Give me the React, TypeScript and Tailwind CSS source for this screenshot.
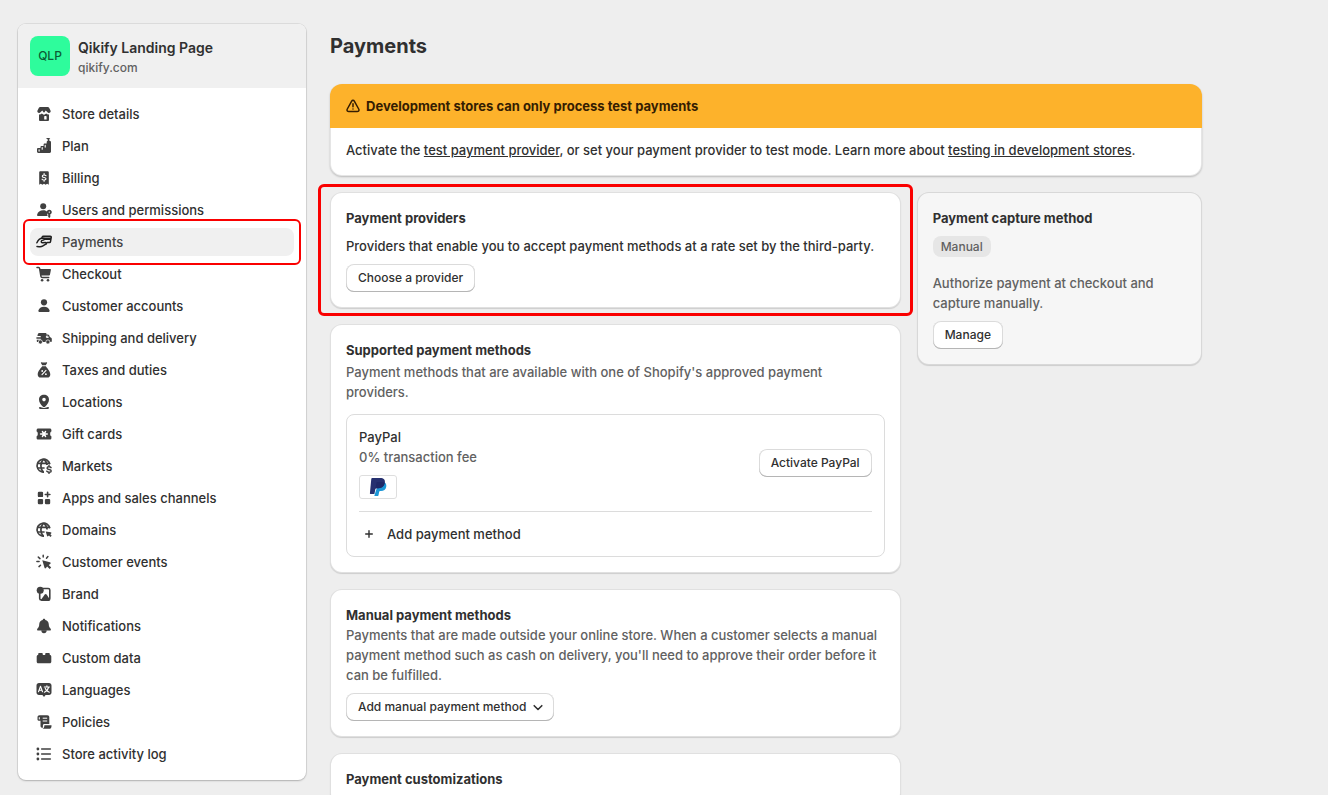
import React from 'react';

type IconProps = { children: React.ReactNode };

const Icon = ({children}: IconProps) => (
    <svg viewBox="0 0 16 16" className="size-4 shrink-0" fill="currentColor" aria-hidden="true">
        {children}
    </svg>
);

const line = {
    fill: "none",
    stroke: "currentColor",
    strokeWidth: 1.6,
    strokeLinecap: "round",
    strokeLinejoin: "round",
} as const;

const cut = {fill: "none", stroke: "#fff", strokeWidth: 1.1, strokeLinecap: "round", strokeLinejoin: "round"} as const;

const globe = (
    <g fill="none" stroke="currentColor" strokeWidth="1.7">
        <path d="M13.900 6.200A6.500 6.500 0 1 0 8 14.200"/>
        <path d="M7.600 1.200C4 4.800 4 10.600 7.400 14.200M7.600 1.200c2.400 1.900 3.500 4 3.500 6.300M1.200 5.400h12.600M1.200 10h7.400"/>
    </g>
);

const navItems = [
    {
        label: "Store details",
        icon: <>
            <path d="M4.200.9h7.600c.6 0 1 .3 1.300.8l1.500 3c.7 1.700-2 3.300-3.300 1.300L9.700 4.600 8.500 6.300c-.3.400-.7.400-1 0L6.300 4.600 4.700 6C3.400 8 .7 6.400 1.400 4.700l1.500-3c.3-.5.7-.8 1.300-.8Z"/>
            <path fillRule="evenodd" d="M3 8.400c1.200.1 2-.3 2.800-1l.8.7c.9.700 1.900.7 2.800 0l.8-.7c.8.700 1.600 1.100 2.800 1V13.700c0 .8-.5 1.300-1.300 1.300H4.300C3.500 15 3 14.500 3 13.700Zm5.200 2.200v3h2.400v-3c0-.4-.3-.7-.7-.7h-1c-.4 0-.7.3-.7.7Z"/>
        </>,
    },
    {
        label: "Plan",
        icon: <>
            <path d="M1 11.300c0-.8.5-1.300 1.300-1.300h2.200V9c0-.7.4-1.100 1.100-1.100h2V6.600c0-.7.4-1.100 1.100-1.100h2V4.200c0-.7.4-1.100 1.100-1.100h1.900c.8 0 1.300.5 1.300 1.300v9.200c0 .8-.5 1.300-1.300 1.300H2.300c-.8 0-1.300-.5-1.300-1.300Z"/>
            <path d="M9.800 0h4.500l-1 1 .2 2.400h-1.700L11.600 1.300Z"/>
            <path {...cut} d="M3.100 11.700v1.400M6.200 9.600v1.600M9.200 7.300v1.800"/>
        </>,
    },
    {
        label: "Billing",
        icon: <>
            <path d="M3.200 2.600c0-.8.500-1.300 1.300-1.300h7c.8 0 1.300.5 1.300 1.300v12.100l-1.600-1-1.600 1.100L8 13.700l-1.600 1.100-1.600-1.100-1.600 1Z"/>
            <path {...cut} strokeWidth="1.200" d="M10 5.700C9.500 4.900 6.300 4.500 6.300 6.200c0 1.800 3.700.8 3.700 2.600 0 1.600-3.300 1.500-3.900.4M8.100 3.600v1M8.100 10.200v1"/>
        </>,
    },
    {
        label: "Users and permissions",
        icon: <>
            <circle cx="7.200" cy="4.200" r="3"/>
            <path d="M7.200 8.300c2 0 3.200.6 4 1.500-.4 1.400.2 2.200.4 4.200H2.400c-1 0-1.500-.6-1.300-1.300.6-2.800 3-4.400 6.100-4.400Z"/>
            <path fillRule="evenodd" d="M13.300 7.700a2.400 2.400 0 0 1 1 4.600v2.700l-1 1-1.100-1v-2.700a2.400 2.400 0 0 1 1.100-4.600Zm0 1.700a.7.700 0 1 0 0 1.400.7.700 0 0 0 0-1.400Z"/>
        </>,
    },
    {
        label: "Payments",
        icon: <>
            <path {...line} strokeWidth="1.500" d="M.9 8.800C2.100 6.200 3.800 4.400 6.200 4.300h1.500c1.100 0 1 1.400 0 1.600L5.700 6.600c-.8 1-.3 2.300 1 2.200l2.700-.4c1.300 0 1.500 1.300.4 1.800l-3.300 2c-1.800 1.200-3 .4-5.500.4"/>
            <path {...line} strokeWidth="1.500" d="M5.900 3.900 6.200 3c.2-.5.600-.7 1.200-.7h6.800c.8 0 1.100.4 1 1.100l-.7 4.200c-.1.700-.5 1-1.200 1h-1.900"/>
            <path d="M7 3.500h8.200l-.4 2.400H9.200Z"/>
        </>,
    },
    {
        label: "Checkout",
        icon: <>
            <path {...line} strokeWidth="1.500" d="M1 1.500h1.600c.6 0 .9.300 1 .9L5 10.500c.1.700.5 1 1.100 1h6.600"/>
            <path d="M3.600 2.900h10.500c.6 0 .9.400.8 1L14 8.600c-.1.600-.6 1-1.200 1H4.800Z"/>
            <circle cx="6.100" cy="14.200" r="1.300"/>
            <circle cx="12" cy="14.200" r="1.300"/>
        </>,
    },
    {
        label: "Customer accounts",
        icon: <>
            <circle cx="8" cy="4.300" r="3.100"/>
            <path d="M8 8.700c3 0 5 1.400 5.600 3.800.2.900-.3 1.500-1.200 1.500H3.600c-.9 0-1.400-.6-1.200-1.500C3 10.100 5 8.700 8 8.700Z"/>
        </>,
    },
    {
        label: "Shipping and delivery",
        icon: <>
            <path d="M3 2.900h6.500c.6 0 1 .4 1 1v.5h1.400c.5 0 .9.200 1.100.7l.9 2 1.200.6c.5.200.7.600.7 1.100v2.300c0 .6-.4 1-1 1H1.700c-.6 0-.9-.3-.9-.9V9.800h3.900V8.700H.4V7.300h4.300V6H1.500V4.600H2C2 3.500 2.400 2.900 3 2.900Z"/>
            <circle cx="4.400" cy="12" r="2.100" stroke="#fff" strokeWidth=".7"/>
            <circle cx="11.900" cy="12" r="2.100" stroke="#fff" strokeWidth=".7"/>
            <path {...cut} strokeWidth=".9" d="M10.800 6h.8l.7 1.500h-1.500Z"/>
        </>,
    },
    {
        label: "Taxes and duties",
        icon: <>
            <path d="M4.900.9C4.700.4 5 .1 5.500.2c1.700.5 3.300.5 5 0 .5-.1.800.2.600.7L9.800 3.300H6.200Z"/>
            <path d="M6.200 4.200h3.600c.5 1.200 4.500 4.400 4.500 8.300 0 2-1.200 3.100-3 3.100H4.700c-1.800 0-3-1.100-3-3.100 0-3.900 4-7.100 4.500-8.300Z"/>
            <path {...cut} d="m6 12.700 4-4.400"/>
            <circle cx="6.200" cy="9" r=".9" fill="#fff"/>
            <circle cx="9.900" cy="12.200" r=".9" fill="#fff"/>
        </>,
    },
    {
        label: "Locations",
        icon: <>
            <path fillRule="evenodd" d="M8 .7c2.900 0 5 2 5 4.800 0 3-1.700 4.800-3.700 7-.7.800-1.900.8-2.600 0C4.700 10.300 3 8.500 3 5.500 3 2.700 5.100.7 8 .7ZM8 3.800a1.800 1.800 0 1 0 0 3.600 1.800 1.800 0 0 0 0-3.600Z"/>
            <path d="M4.100 13.100c1.200 0 1.900 1 3.900 1s2.700-1 3.900-1c1.600 0 1.600 1.900 0 1.900H4.100c-1.600 0-1.600-1.900 0-1.900Z"/>
        </>,
    },
    {
        label: "Gift cards",
        icon: <>
            <path d="M2.200 2.400h11.600c.9 0 1.600.6 1.600 1.600v1.600C13.800 6 13.800 10 15.400 10.300V12c0 1-.7 1.600-1.600 1.600H2.200C1.300 13.600.6 13 .6 12v-1.700C2.200 10 2.200 6 .6 5.600V4c0-1 .7-1.600 1.600-1.600Z"/>
            <path {...cut} strokeWidth="1.400" d="M4.500 8h6.800M6.400 5.500l3.200 5M9.600 5.500l-3.200 5"/>
        </>,
    },
    {
        label: "Markets",
        icon: <>
            {globe}
            <path d="M9.600 7h6.400v9H9.600Z" fill="#fff"/>
            <path {...line} strokeWidth="1.500" d="M15 9.700c-.6-1.200-3.900-1.200-3.900.5 0 1.900 4.100.9 4.100 2.800 0 1.700-3.600 1.600-4.400.2M13 7.600v1.100M13 14.400v.9"/>
        </>,
    },
    {
        label: "Apps and sales channels",
        icon: <>
            <rect x="1.800" y="1.800" width="5.300" height="5.300" rx="1.200"/>
            <rect x="1.800" y="8.900" width="5.300" height="5.300" rx="1.200"/>
            <rect x="8.900" y="8.900" width="5.300" height="5.300" rx="1.200"/>
            <path {...line} d="M11.600 2.200v4.600M9.300 4.500h4.600"/>
        </>,
    },
    {
        label: "Domains",
        icon: <>
            {globe}
            <path d="M9 8.200h7V16H9Z" fill="#fff"/>
            <path d="m9.700 9.400 5 .9c.8.200 1 .8.400 1.300l-.7.600 1.300 1.500-1.300 1.200-1.400-1.500-.7.700c-.5.500-1.100.3-1.300-.4Z"/>
        </>,
    },
    {
        label: "Customer events",
        icon: <>
            <path d="m6.300 6.200 7.600 2.100c.9.200 1 1.100.300 1.600l-1.500 1.100 2.500 2.600-1.500 1.500-2.600-2.500-1.100 1.500c-.5.700-1.300.5-1.500-.300Z"/>
            <path {...line} strokeWidth="1.500" d="M7.200 1.200v1.900M2.300 3.100l1.700 1.500M11.900 2.500l-1.400 1.700M.9 7.500h2.200M3 12.600l1.500-1.400"/>
        </>,
    },
    {
        label: "Brand",
        icon: <>
            <path {...line} strokeWidth="1.600" d="M5.500 2.500h6.700c1 0 1.600.6 1.600 1.600v8.300c0 1-.6 1.600-1.600 1.600H5.300c-1 0-1.600-.6-1.600-1.600V7"/>
            <circle cx="4.200" cy="4.300" r="3.500"/>
            <path d="M4.900 14 8.700 8.600c.5-.7 1.400-.7 1.900 0l3.700 5.400-1.500 1H5.400Z"/>
        </>,
    },
    {
        label: "Notifications",
        icon: <>
            <path d="M8 .8c.8 0 1.200.5 1.300 1.200 2.100.5 3.400 2.100 3.500 4.500.1 2.200.6 2.800 1.700 4 .8.900.5 2.100-.8 2.100H2.300c-1.300 0-1.600-1.200-.8-2.100 1.100-1.200 1.600-1.800 1.700-4C3.300 4.100 4.600 2.500 6.700 2 6.800 1.300 7.200.8 8 .8Z"/>
            <path d="M5.300 12.300h5.400c0 2-1 3-2.700 3s-2.700-1-2.700-3Z"/>
        </>,
    },
    {
        label: "Custom data",
        icon: <path d="M2.200 5V4c0-.7.400-1.100 1.100-1.100h2.400c.7 0 1.100.4 1.100 1.100v1h2.400V4c0-.7.400-1.100 1.100-1.100h2.400c.7 0 1.100.4 1.100 1.100v1c.9 0 1.500.6 1.500 1.500v5.200c0 .9-.6 1.500-1.500 1.500H2.200c-.9 0-1.500-.6-1.500-1.500V6.500C.7 5.600 1.300 5 2.200 5Z"/>,
    },
    {
        label: "Languages",
        icon: <>
            <path d="M3 1h10c1.500 0 2.500 1 2.500 2.500v7c0 1.500-1 2.500-2.500 2.500H9.600L8 14.900 6.400 13H3C1.500 13 .5 12 .5 10.500v-7C.5 2 1.500 1 3 1Z"/>
            <path {...cut} d="m2.500 9.800 2-5.600 2 5.600M3.200 8.200h2.600M8.300 5h5.200M10.900 3.700V5M12.600 5.200c-.5 2.300-1.900 4-4.200 5M9.200 6.200c.5 1.800 1.900 3.300 4.200 4"/>
        </>,
    },
    {
        label: "Policies",
        icon: <>
            <path d="M3.600 1.200h7.700c1.300 0 2 .8 2 2V10H8.400c-.9 0-1.500.6-1.500 1.500v2.300c-1.500.1-2.400-.7-2.400-2.100V6.700H2.600c-.7 0-1.100-.4-1.100-1.100V3.300c0-1.300.8-2.100 2.100-2.100Z"/>
            <path {...cut} strokeWidth="1" d="M3.300 5V3.600M7.100 4.200h3.700M7.100 7h3.700"/>
            <path d="M8.400 11.200h7.100v1c0 1.600-.9 2.600-2.500 2.600H6.500c1.300-.5 1.900-1.600 1.900-3.600Z"/>
        </>,
    },
    {
        label: "Store activity log",
        icon: <>
            <circle cx="1.900" cy="3" r="1.400"/>
            <circle cx="1.900" cy="8" r="1.400"/>
            <circle cx="1.900" cy="13" r="1.400"/>
            <path {...line} d="M5.700 3h8.600M5.700 8h8.600M5.700 13h8.600"/>
        </>,
    },
];

const cardClass = "rounded-xl p-4 shadow-[inset_0_0_0_1px_rgba(0,0,0,0.12),0_1px_1px_rgba(0,0,0,0.14)]";

const Button = ({children}: { children: React.ReactNode }) => (
    <button
        type="button"
        className="inline-flex h-7 items-center gap-1 rounded-lg bg-white px-3 text-xs font-[550] whitespace-nowrap shadow-[inset_0_-1px_0_#b5b5b5,inset_0_0_0_1px_rgba(0,0,0,0.14)]"
    >
        {children}
    </button>
);

const Sidebar = () => (
    <aside className="w-72 shrink-0 rounded-lg bg-white shadow-[0_0_0_1px_rgba(0,0,0,0.07),0_1px_2px_rgba(0,0,0,0.2)]">
        <div className="flex h-16 gap-2 rounded-t-lg bg-[#f0f0f0] p-3">
            <div className="flex size-10 items-center justify-center rounded-lg bg-[#2efc9c] text-xs text-[#0b5c35]">
                QLP
            </div>
            <div className="pt-0.5">
                <p className="text-sm leading-5 font-semibold">Qikify Landing Page</p>
                <p className="text-xs leading-5 text-[#616161]">qikify.com</p>
            </div>
        </div>
        <nav aria-label="Settings" className="p-3">
            <ul className="space-y-1">
                {navItems.map(({label, icon}) => {
                    const active = label === "Payments";
                    return (
                        <li key={label} className="relative">
                            <a
                                href="#"
                                aria-current={active ? "page" : undefined}
                                className={`flex h-7 items-center gap-2.5 rounded-lg px-1.5 font-[550] ${active ? "bg-[#f0f0f0] text-[#454545]" : ""}`}
                            >
                                <span className={active ? "text-[#1f1f1f]" : "text-[#404040]"}>
                                    <Icon>{icon}</Icon>
                                </span>
                                {label}
                            </a>
                            {active && (
                                <div className="pointer-events-none absolute -inset-x-[7px] -inset-y-[9px] z-10 rounded-md border-2 border-[#fa0000]"/>
                            )}
                        </li>
                    );
                })}
            </ul>
        </nav>
    </aside>
);

const App = () => {
    return (
        <div
            className="min-h-screen bg-[#eeeeee] py-6 pl-[18px] pr-4 font-['Inter',sans-serif] text-[13px] leading-5 font-[450] text-[#303030]">
            <div className="flex max-w-[1184px] items-start gap-6">
                <Sidebar/>
                <main className="min-w-0 flex-1">
                    <h1 className="pt-2 text-xl leading-7 font-[650]">Payments</h1>

                    <section
                        className="mt-6 overflow-hidden rounded-xl bg-white shadow-[inset_0_0_0_1px_rgba(0,0,0,0.1),0_1px_2px_rgba(0,0,0,0.22)]">
                        <div className="flex h-11 items-center gap-1.5 bg-[#fdb22b] px-4 text-[#351d02]">
                            <svg viewBox="-.5 0 15 14" className="size-3.5 shrink-0" fill="none"
                                 stroke="currentColor" strokeWidth="1.600" strokeLinecap="round" strokeLinejoin="round"
                                 aria-hidden="true">
                                <path d="M5.600 1.700c.6-1.100 2.200-1.100 2.800 0l4.700 8.500c.8 1.500 0 2.800-1.700 2.800H2.600C.9 13 .1 11.700.9 10.200Z"/>
                                <path d="M7 4.700v3M7 10.200v.1"/>
                            </svg>
                            <h2 className="font-[650]">Development stores can only process test payments</h2>
                        </div>
                        <p className="px-4 pt-3 pb-4">
                            Activate the <a href="#" className="underline">test payment provider</a>, or set your
                            payment provider to test mode. Learn more about{" "}
                            <a href="#" className="underline">testing in development stores</a>.
                        </p>
                    </section>

                    <div className="mt-4 grid grid-cols-[2fr_1fr] items-start gap-4">
                        <div className="space-y-4">
                            <section className={`relative bg-white ${cardClass}`}>
                                <h2 className="font-[650]">Payment providers</h2>
                                <p className="my-2">
                                    Providers that enable you to accept payment methods at a rate set by the
                                    third-party.
                                </p>
                                <Button>Choose a provider</Button>
                                <div className="pointer-events-none absolute -inset-x-3 -inset-y-2 rounded-md border-3 border-[#fa0000]"/>
                            </section>

                            <section className={`bg-white ${cardClass}`}>
                                <h2 className="font-[650]">Supported payment methods</h2>
                                <p className="mt-0.5 max-w-lg text-[#616161]">
                                    Payment methods that are available with one of Shopify's approved payment
                                    providers.
                                </p>
                                <div className="mt-3 rounded-lg border border-[#dcdcdc] p-3">
                                    <div className="flex items-center justify-between border-b border-[#dcdcdc] pb-3">
                                        <div>
                                            <h3 className="font-[550]">PayPal</h3>
                                            <p className="text-[#616161]">0% transaction fee</p>
                                            <svg viewBox="0 0 38 24" className="mt-2 h-6 w-[38px]" role="img"
                                                 aria-label="PayPal">
                                                <rect x=".5" y=".5" width="37" height="23" rx="2.500" fill="#fff"
                                                      stroke="#dedede"/>
                                                <path fill="#1b96d6"
                                                      d="M25.700 7.600c1.500.9 1.900 2.600 1.500 4.500-.5 2.600-2.400 3.900-5.200 3.900h-.9c-.5 0-.8.300-.9.700l-.7 3.600c-.1.400-.3.600-.7.600h-3.500l1.500-5 2-5.500Z"/>
                                                <path fill="#26306f"
                                                      d="M13.200 3h7.900c3.600 0 5.400 1.700 4.700 5-.7 3.500-2.900 5.200-6.400 5.200h-2.100c-.5 0-.8.300-.9.800l-1 4.900h-3.900c-.5 0-.7-.3-.6-.7L12.300 3.700c.1-.4.4-.7.9-.7Z"/>
                                                <path fill="#1f2866"
                                                      d="M25.700 7.600c-1-.5-2.100-.7-3.300-.7h-4c-.5 0-.8.300-.9.700l-1.100 6.100c.1-.3.500-.5.9-.5h2.100c3.400 0 5.700-1.600 6.300-5.100Z"/>
                                            </svg>
                                        </div>
                                        <Button>Activate PayPal</Button>
                                    </div>
                                    <button type="button" className="mt-3 flex items-center gap-3.5 pl-1.5 font-[550]">
                                        <svg viewBox="0 0 8 8" className="size-2" fill="none"
                                             stroke="currentColor" strokeWidth="1.400" strokeLinecap="round"
                                             aria-hidden="true">
                                            <path d="M4 .7v6.600M.7 4h6.600"/>
                                        </svg>
                                        Add payment method
                                    </button>
                                </div>
                            </section>

                            <section className={`bg-white ${cardClass}`}>
                                <h2 className="font-[650]">Manual payment methods</h2>
                                <p className="mb-2 text-[#616161]">
                                    Payments that are made outside your online store. When a customer selects a manual
                                    payment method such as cash on delivery, you'll need to approve their order before
                                    it can be fulfilled.
                                </p>
                                <Button>
                                    Add manual payment method
                                    <svg viewBox="0 0 16 16" className="-mr-1 size-4" {...line} aria-hidden="true">
                                        <path d="m4.200 6.700 3.800 3.800 3.800-3.800"/>
                                    </svg>
                                </Button>
                            </section>

                            <section className={`bg-white ${cardClass}`}>
                                <h2 className="font-[650]">Payment customizations</h2>
                            </section>
                        </div>

                        <section className={`bg-[#f6f6f6] ${cardClass}`}>
                            <h2 className="font-[650]">Payment capture method</h2>
                            <span
                                className="mt-2 flex h-[21px] w-fit items-center rounded-lg bg-[#e6e6e6] px-2 text-xs text-[#616161]">
                                Manual
                            </span>
                            <p className="mt-4 mb-2 text-[#616161]">
                                Authorize payment at checkout and capture manually.
                            </p>
                            <Button>Manage</Button>
                        </section>
                    </div>
                </main>
            </div>
        </div>
    );
};

export default App;
